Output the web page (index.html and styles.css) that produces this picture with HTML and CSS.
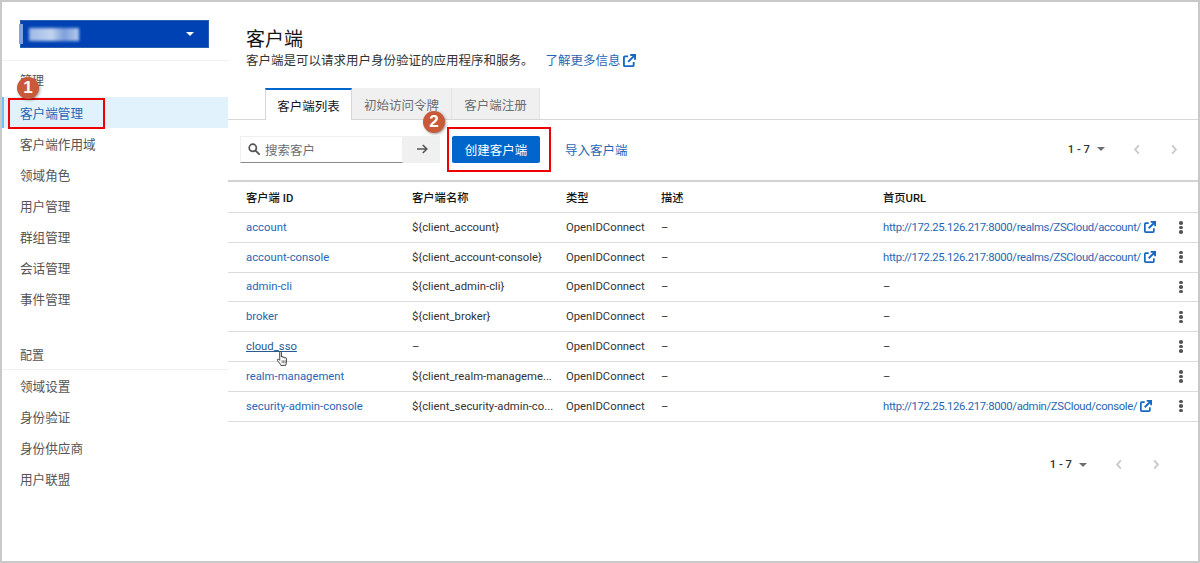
FILE: index.html
```html
<!DOCTYPE html>
<html lang="zh">
<head>
    <meta charset="UTF-8">
    <meta name="viewport" content="width=device-width, initial-scale=1.0">
    <title>客户端</title>
    <link rel="stylesheet" href="styles.css">
</head>
<body>
    <div class="frame">
        <aside class="sidebar">
            <div class="realm">
                <span class="realm-name"></span>
                <span class="caret caret-white"></span>
            </div>
            <div class="nav-label nav-label-first">管理</div>
            <a class="nav-item active">客户端管理</a>
            <a class="nav-item">客户端作用域</a>
            <a class="nav-item">领域角色</a>
            <a class="nav-item">用户管理</a>
            <a class="nav-item">群组管理</a>
            <a class="nav-item">会话管理</a>
            <a class="nav-item">事件管理</a>
            <div class="nav-label nav-label-second">配置</div>
            <a class="nav-item">领域设置</a>
            <a class="nav-item">身份验证</a>
            <a class="nav-item">身份供应商</a>
            <a class="nav-item">用户联盟</a>
        </aside>

        <main class="content">
            <div class="page-head">
                <h1>客户端</h1>
                <p>客户端是可以请求用户身份验证的应用程序和服务。<a class="more">了解更多信息<svg class="ext ext-big" viewBox="0 0 14 14"><use href="#ext"></use></svg></a></p>
            </div>

            <div class="tabs">
                <div class="tab active">客户端列表</div>
                <div class="tab">初始访问令牌</div>
                <div class="tab">客户端注册</div>
            </div>

            <div class="toolbar">
                <div class="search">
                    <svg class="search-icon" viewBox="0 0 14 14"><circle cx="5.6" cy="5.6" r="4.2" fill="none" stroke="#555" stroke-width="2"></circle><path d="M8.8 8.8L13 13" stroke="#555" stroke-width="2.2" stroke-linecap="round"></path></svg>
                    <span>搜索客户</span>
                </div>
                <div class="search-go">
                    <svg viewBox="0 0 12 12"><path d="M1 6H10.5M6.8 2L10.8 6L6.8 10" fill="none" stroke="#555" stroke-width="1.6"></path></svg>
                </div>
                <button class="btn-primary">创建客户端</button>
                <a class="btn-link">导入客户端</a>
                <div class="pager pager-top">
                    <span class="pager-count">1 - 7</span>
                    <span class="caret"></span>
                    <svg class="chev chev-prev" viewBox="0 0 8 12"><path d="M6 1.5L2 6L6 10.5" fill="none" stroke="#c6c8ca" stroke-width="2"></path></svg>
                    <svg class="chev chev-next" viewBox="0 0 8 12"><path d="M2 1.5L6 6L2 10.5" fill="none" stroke="#c6c8ca" stroke-width="2"></path></svg>
                </div>
            </div>

            <div class="clients">
                <div class="row row-head">
                    <div>客户端 ID</div>
                    <div>客户端名称</div>
                    <div>类型</div>
                    <div>描述</div>
                    <div>首页URL</div>
                    <div></div>
                </div>
                <div class="row">
                    <div><a>account</a></div>
                    <div>${client_account}</div>
                    <div>OpenIDConnect</div>
                    <div>–</div>
                    <div><a class="url">http://172.25.126.217:8000/realms/ZSCloud/account/<svg class="ext" viewBox="0 0 14 14"><use href="#ext"></use></svg></a></div>
                    <div class="kebab"><i></i><i></i><i></i></div>
                </div>
                <div class="row">
                    <div><a>account-console</a></div>
                    <div>${client_account-console}</div>
                    <div>OpenIDConnect</div>
                    <div>–</div>
                    <div><a class="url">http://172.25.126.217:8000/realms/ZSCloud/account/<svg class="ext" viewBox="0 0 14 14"><use href="#ext"></use></svg></a></div>
                    <div class="kebab"><i></i><i></i><i></i></div>
                </div>
                <div class="row">
                    <div><a>admin-cli</a></div>
                    <div>${client_admin-cli}</div>
                    <div>OpenIDConnect</div>
                    <div>–</div>
                    <div>–</div>
                    <div class="kebab"><i></i><i></i><i></i></div>
                </div>
                <div class="row">
                    <div><a>broker</a></div>
                    <div>${client_broker}</div>
                    <div>OpenIDConnect</div>
                    <div>–</div>
                    <div>–</div>
                    <div class="kebab"><i></i><i></i><i></i></div>
                </div>
                <div class="row">
                    <div><a class="hovered">cloud_sso</a></div>
                    <div>–</div>
                    <div>OpenIDConnect</div>
                    <div>–</div>
                    <div>–</div>
                    <div class="kebab"><i></i><i></i><i></i></div>
                </div>
                <div class="row">
                    <div><a>realm-management</a></div>
                    <div>${client_realm-manageme...</div>
                    <div>OpenIDConnect</div>
                    <div>–</div>
                    <div>–</div>
                    <div class="kebab"><i></i><i></i><i></i></div>
                </div>
                <div class="row">
                    <div><a>security-admin-console</a></div>
                    <div>${client_security-admin-co...</div>
                    <div>OpenIDConnect</div>
                    <div>–</div>
                    <div><a class="url">http://172.25.126.217:8000/admin/ZSCloud/console/<svg class="ext" viewBox="0 0 14 14"><use href="#ext"></use></svg></a></div>
                    <div class="kebab"><i></i><i></i><i></i></div>
                </div>
            </div>

            <div class="pager pager-bottom">
                <span class="pager-count">1 - 7</span>
                <span class="caret"></span>
                <svg class="chev chev-prev" viewBox="0 0 8 12"><path d="M6 1.5L2 6L6 10.5" fill="none" stroke="#c6c8ca" stroke-width="2"></path></svg>
                <svg class="chev chev-next" viewBox="0 0 8 12"><path d="M2 1.5L6 6L2 10.5" fill="none" stroke="#c6c8ca" stroke-width="2"></path></svg>
            </div>
        </main>
    </div>

    <!-- annotations on top of the screenshot -->
    <div class="mark mark-1"></div>
    <div class="mark mark-2"></div>
    <div class="badge badge-1">1</div>
    <div class="badge badge-2">2</div>
    <svg class="hand" viewBox="0 0 14 18"><path d="M4 9V2.2C4 1.3 5.8 1.3 5.8 2.2V7.4C5.8 6.6 7.6 6.6 7.6 7.4V8C7.6 7.2 9.4 7.2 9.4 8V8.6C9.4 7.9 11.2 7.9 11.2 8.8V13C11.2 14.5 10.6 15.2 10.4 16.4H5.2C4.6 14.6 3.2 13.6 1.6 11.2C1 10.2 2.2 9.2 3 10L4 11Z" fill="#fff" stroke="#333" stroke-width="1"></path><path d="M6.6 11V14M8.2 11V14M9.8 11V14" stroke="#333" stroke-width=".7"></path></svg>

    <svg class="defs" width="0" height="0">
        <symbol id="ext" viewBox="0 0 14 14">
            <path d="M5.5 2.5H2A1 1 0 0 0 1 3.5V12A1 1 0 0 0 2 13H10.5A1 1 0 0 0 11.5 12V8.5" fill="none" stroke="currentColor" stroke-width="2"></path>
            <path d="M5.5 8.5L12 2M7.8 1H13V6.2" fill="none" stroke="currentColor" stroke-width="2.2"></path>
        </symbol>
    </svg>
</body>
</html>
```

FILE: styles.css
```css
* {
    box-sizing: border-box;
}

html, body {
    margin: 0;
    height: 563px;
    overflow: hidden;
}

body {
    position: relative;
    background-color: white;
    color: #151515;
    font-family: Roboto, "Noto Sans CJK SC", sans-serif;
    font-size: 11.3px;
}

a {
    color: #1f67b5;
}

.frame {
    display: flex;
    height: 563px;
    border: 2px solid #c9c9c9;
}

/* sidebar */
.sidebar {
    width: 226px;
    flex-shrink: 0;
    padding-top: 18px;
}

.realm {
    position: relative;
    display: flex;
    align-items: center;
    justify-content: space-between;
    width: 189px;
    height: 28px;
    margin-left: 18px;
    padding: 0 14px 0 8px;
    background-color: #0041b3;
    border: 1px solid #2b5fae;
}

.realm::before {
    content: "";
    position: absolute;
    left: -2px;
    top: 3px;
    width: 4px;
    height: 20px;
    background-color: #7fa3e2;
}

.realm-name {
    width: 50px;
    height: 13px;
    background: linear-gradient(90deg, #9db9e6, #c3d4ef 45%, #7d9fdb 70%, #b6cbeb);
    filter: blur(1.5px);
}

.caret {
    width: 0;
    height: 0;
    border-left: 4px solid transparent;
    border-right: 4px solid transparent;
    border-top: 4px solid #6a6e73;
}

.caret-white {
    border-top-color: white;
}

.nav-label {
    display: flex;
    align-items: center;
    padding-left: 18px;
    color: #555;
    font-size: 12px;
}

.nav-label-first {
    height: 37px;
    margin-top: 12px;
    border-top: 1px solid #f0f0f0;
}

.nav-label-second {
    height: 30px;
    margin-top: 26px;
    border-bottom: 1px solid #f0f0f0;
}

.nav-item {
    display: flex;
    align-items: center;
    height: 31px;
    padding-left: 18px;
    color: #555;
    font-size: 12.6px;
}

.nav-item.active {
    padding-left: 16px;
    background-color: #e2f2fc;
    border-left: 2px solid #73bcf7;
    color: #1f67b5;
}

/* main */
.content {
    flex: 1;
    min-width: 0;
    padding-top: 26px;
}

.page-head {
    padding-left: 18px;
}

.page-head h1 {
    margin: 0;
    font-size: 19px;
    font-weight: normal;
    line-height: 24px;
}

.page-head p {
    margin: 0;
    font-size: 12.5px;
    line-height: 18px;
    color: #333;
}

.more {
    margin-left: 12px;
}

.ext {
    width: 12px;
    height: 12px;
    margin-left: 3px;
    vertical-align: -2px;
    color: #1668c4;
}

.ext-big {
    width: 13px;
    height: 13px;
    margin-left: 2px;
}

.tabs {
    display: flex;
    height: 32px;
    margin-top: 18px;
    padding-left: 37px;
    border-bottom: 1px solid #d7d7d7;
}

.tab {
    display: flex;
    align-items: center;
    justify-content: center;
    height: 31px;
    padding-top: 2px;
    background-color: #f0f0f0;
    border-right: 1px solid #e4e4e4;
    color: #6a6e73;
    font-size: 12.5px;
    width: 100px;
}

.tab:last-child {
    width: 88px;
}

.tab.active {
    width: 87px;
    height: 32px;
    background-color: white;
    border-top: 2px solid #06c;
    border-left: 1px solid #d7d7d7;
    border-right: 1px solid #d7d7d7;
    padding-top: 0;
    color: #151515;
}

.toolbar {
    display: flex;
    align-items: center;
    height: 60px;
    padding-left: 12px;
    padding-bottom: 2px;
}

.search {
    display: flex;
    align-items: center;
    gap: 5px;
    width: 163px;
    height: 27px;
    padding-left: 7px;
    border: 1px solid #f0f0f0;
    border-bottom: 1px solid #8a8d90;
    color: #6a6e73;
    font-size: 12.5px;
}

.search-icon {
    width: 12px;
    height: 12px;
}

.search-go {
    display: flex;
    align-items: center;
    justify-content: center;
    width: 37px;
    height: 27px;
    background-color: #f0f0f0;
}

.search-go svg {
    width: 12px;
    height: 12px;
}

.btn-primary {
    width: 88px;
    height: 27px;
    margin-left: 12px;
    padding: 0;
    background-color: #06c;
    border: none;
    border-radius: 2px;
    color: white;
    font-family: inherit;
    font-size: 12.5px;
}

.btn-link {
    margin-left: 25px;
    font-size: 12.5px;
}

.pager {
    display: flex;
    align-items: center;
}

.pager-top {
    margin-left: auto;
    margin-right: 20px;
}

.pager-bottom {
    justify-content: flex-end;
    margin-top: 34px;
    margin-right: 38px;
    height: 18px;
}

.pager-count {
    font-weight: 500;
    color: #333;
    white-space: pre;
    margin-right: 7px;
}

.chev {
    width: 8px;
    height: 11px;
}

.chev-prev {
    margin-left: 28px;
}

.chev-next {
    margin-left: 29px;
}

/* client table */
.clients {
    border-top: 2px solid #d2d2d2;
}

.row {
    display: grid;
    grid-template-columns: 166px 154px 95px 222px 289px 26px;
    align-items: center;
    height: 29.8px;
    padding-left: 18px;
    border-bottom: 1px solid #dcdcdc;
    color: #333;
    white-space: nowrap;
}

.row-head {
    height: 31px;
    padding-bottom: 1px;
    color: #151515;
    font-weight: 500;
}

.url {
    letter-spacing: -0.32px;
}

.hovered {
    color: #2a5a90;
    text-decoration: underline;
}

.kebab {
    display: flex;
    flex-direction: column;
    align-items: center;
    gap: 1px;
    width: 18px;
}

.kebab i {
    width: 3.5px;
    height: 3.5px;
    border-radius: 50%;
    background-color: #555;
}

/* annotations */
.mark {
    position: absolute;
    border: 2px solid #f00000;
}

.mark-1 {
    left: 8px;
    top: 98px;
    width: 97px;
    height: 31px;
}

.mark-2 {
    left: 447px;
    top: 127px;
    width: 104px;
    height: 45px;
}

.badge {
    position: absolute;
    width: 22px;
    height: 22px;
    border-radius: 50%;
    background-color: #c85a3a;
    box-shadow: 1px 1px 3px rgba(0, 0, 0, 0.4);
    color: white;
    font-family: "Liberation Sans", sans-serif;
    font-size: 17px;
    font-weight: bold;
    line-height: 22px;
    text-align: center;
}

.badge-1 {
    left: 17px;
    top: 77px;
}

.badge-2 {
    left: 423px;
    top: 111px;
}

.hand {
    position: absolute;
    left: 276px;
    top: 350px;
    width: 13px;
    height: 17px;
}

.defs {
    position: absolute;
}
```
